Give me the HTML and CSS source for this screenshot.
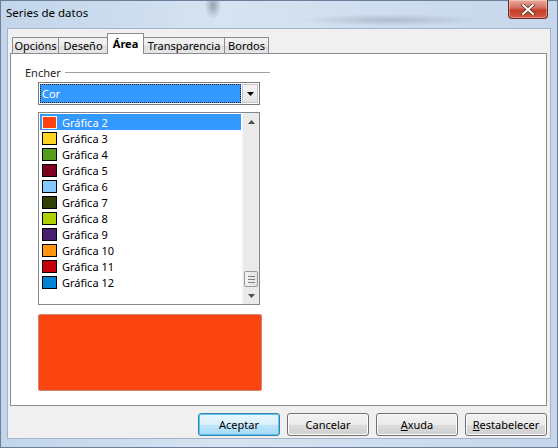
FILE: index.html
```html
<!DOCTYPE html>
<html lang="gl">
  <head>
    <meta charset="UTF-8" />
    <title>Series de datos</title>
    <link rel="stylesheet" href="styles.css">
  </head>
  <body>
    <div class="window">
      <div class="titlebar">
        <span class="title">Series de datos</span>
        <span class="close">
          <svg width="14" height="11" viewBox="0 0 14 11">
            <path d="M2,1 L12,10 M12,1 L2,10" stroke="#5a2a22" stroke-width="3.6" stroke-linecap="round"></path>
            <path d="M2,1 L12,10 M12,1 L2,10" stroke="#fff" stroke-width="2" stroke-linecap="round"></path>
          </svg>
        </span>
      </div>

      <div class="client">
        <!-- pestanas -->
        <div class="tabs">
          <div class="tab tab-opcions">Opcións</div>
          <div class="tab tab-deseno">Deseño</div>
          <div class="tab tab-area active">Área</div>
          <div class="tab tab-transp">Transparencia</div>
          <div class="tab tab-bordos">Bordos</div>
        </div>

        <div class="panel">
          <div class="group-head">
            <span>Encher</span>
            <span class="group-line"></span>
          </div>

          <div class="combo">
            <div class="combo-value"><span>Cor</span></div>
            <div class="combo-btn">
              <svg width="7" height="4" viewBox="0 0 7 4"><path d="M0,0 H7 L3.5,4 Z" fill="#000"></path></svg>
            </div>
          </div>

          <div class="listbox">
            <ul class="items">
              <li class="selected"><i style="background:#ff420e"></i>Gráfica 2</li>
              <li><i style="background:#ffd320"></i>Gráfica 3</li>
              <li><i style="background:#579d1c"></i>Gráfica 4</li>
              <li><i style="background:#7e0021"></i>Gráfica 5</li>
              <li><i style="background:#83caff"></i>Gráfica 6</li>
              <li><i style="background:#314004"></i>Gráfica 7</li>
              <li><i style="background:#aecf00"></i>Gráfica 8</li>
              <li><i style="background:#4b1f6f"></i>Gráfica 9</li>
              <li><i style="background:#ff950e"></i>Gráfica 10</li>
              <li><i style="background:#c5000b"></i>Gráfica 11</li>
              <li><i style="background:#0084d1"></i>Gráfica 12</li>
            </ul>
            <div class="scrollbar">
              <span class="arrow">
                <svg width="7" height="4" viewBox="0 0 7 4"><path d="M0,4 H7 L3.5,0 Z" fill="#4f4f4f"></path></svg>
              </span>
              <span class="track">
                <span class="thumb"><b></b><b></b><b></b></span>
              </span>
              <span class="arrow">
                <svg width="7" height="4" viewBox="0 0 7 4"><path d="M0,0 H7 L3.5,4 Z" fill="#4f4f4f"></path></svg>
              </span>
            </div>
          </div>

          <div class="preview"></div>
        </div>

        <div class="buttons">
          <button class="btn default">Aceptar</button>
          <button class="btn">Cancelar</button>
          <button class="btn"><u>A</u>xuda</button>
          <button class="btn"><u>R</u>estabelecer</button>
        </div>
      </div>
    </div>
  </body>
</html>
```

FILE: styles.css
```css
*,
*:before,
*:after {
  box-sizing: border-box;
}
body {
  margin: 0;
  font: 11px/1 "Noto Sans", "Open Sans", sans-serif;
  color: #000;
}
.window {
  width: 558px;
  height: 448px;
  display: flex;
  flex-direction: column;
  background:
    radial-gradient(ellipse 8px 14px at 212px 4px, rgba(70, 80, 100, 0.45), transparent),
    radial-gradient(ellipse 90px 6px at 390px 19px, rgba(90, 100, 120, 0.28), transparent),
    linear-gradient(90deg, #c2d5ea, #d6e3f1 40%, #cddcee 75%, #c6d7eb);
  border: 1px solid #6a7f99;
}
.titlebar {
  height: 27px;
  display: flex;
  align-items: flex-start;
  justify-content: space-between;
  padding-left: 5px;
}
.title {
  margin-top: 5px;
  font-size: 11.5px;
  line-height: 14px;
}
.close {
  width: 40px;
  height: 19px;
  margin-right: 9px;
  margin-top: -1px;
  display: flex;
  align-items: center;
  justify-content: center;
  border: 1px solid #6b2b22;
  border-top: none;
  border-radius: 0 0 4px 4px;
  background: linear-gradient(#e9a899, #d2705f 45%, #c2402d 55%, #d2573f);
  box-shadow: inset 0 0 0 1px rgba(255, 255, 255, 0.35);
}
.client {
  flex: 1;
  margin: 0 6px 8px;
  background: #f0f0f0;
  border: 1px solid #a3b4c8;
  padding: 4px 3px 0 2px;
  display: flex;
  flex-direction: column;
}

/* pestanas */
.tabs {
  height: 20px;
  display: flex;
  align-items: flex-end;
  padding-left: 2px;
  position: relative;
  z-index: 1;
}
.tab {
  height: 16px;
  border: 1px solid #898c95;
  border-bottom: none;
  margin-left: -1px;
  background: linear-gradient(#f3f3f3, #ebebeb 50%, #dedede 51%, #e5e5e5);
  display: flex;
  align-items: center;
  justify-content: center;
}
.tab:first-child {
  margin-left: 0;
}
.tab.active {
  height: 21px;
  margin-bottom: -1px;
  background: #fff;
  font-weight: bold;
  padding-bottom: 1px;
}
.tab-opcions { width: 47px; }
.tab-deseno { width: 50px; }
.tab-area { width: 37px; }
.tab-transp { width: 82px; }
.tab-bordos { width: 45px; }

.panel {
  height: 353px;
  background: #fff;
  border: 1px solid #898c95;
  padding: 11px 0 0 14px;
}
.group-head {
  width: 245px;
  height: 14px;
  display: flex;
  align-items: center;
  gap: 4px;
  color: #1e1e1e;
}
.group-line {
  flex: 1;
  height: 1px;
  background: #a0a0a0;
}

/* lista despregable */
.combo {
  width: 222px;
  height: 23px;
  margin: 3px 0 0 13px;
  border: 1px solid #7a7a7a;
  padding: 1px;
  display: flex;
  gap: 1px;
}
.combo-value {
  flex: 1;
  background: #3399ff;
  border: 1px dotted #1a1a1a;
  color: #fff;
  display: flex;
  align-items: center;
  padding-left: 1px;
}
.combo-btn {
  width: 16px;
  border: 1px solid #c6c6c6;
  background: linear-gradient(#f4f4f4, #e4e4e4);
  display: flex;
  align-items: center;
  justify-content: center;
}

.listbox {
  width: 222px;
  height: 193px;
  margin: 7px 0 0 13px;
  border: 1px solid #828790;
  display: flex;
}
.items {
  flex: 1;
  list-style: none;
  margin: 0;
  padding: 1px 1px 0 1px;
}
.items li {
  height: 16px;
  display: flex;
  align-items: center;
  padding-left: 2px;
  padding-top: 1px;
  gap: 5px;
}
.items li i {
  width: 15px;
  height: 13px;
  border: 1px solid #000;
}
.items li.selected {
  background: #3399ff;
  color: #fff;
}
.items li.selected i {
  border-color: #f4f4f4;
}
.scrollbar {
  width: 17px;
  background: #eaeaea;
  border-left: 1px solid #f4f4f4;
  display: flex;
  flex-direction: column;
}
.scrollbar .arrow {
  height: 17px;
  display: flex;
  align-items: center;
  justify-content: center;
}
.scrollbar .track {
  flex: 1;
  display: flex;
  flex-direction: column;
  justify-content: flex-end;
}
.thumb {
  height: 16px;
  margin: 0 1px 0 1px;
  border: 1px solid #9a9a9a;
  border-radius: 2px;
  background: linear-gradient(90deg, #f3f3f3, #e2e2e2);
  display: flex;
  flex-direction: column;
  justify-content: center;
  align-items: center;
  gap: 2px;
}
.thumb b {
  width: 7px;
  height: 1px;
  background: #7d7d7d;
}

.preview {
  width: 224px;
  height: 77px;
  margin: 9px 0 0 13px;
  background: #fc4410;
  border: 1px solid #c9896f;
  border-radius: 2px;
}

/* botons */
.buttons {
  display: flex;
  justify-content: flex-end;
  gap: 7px;
  margin-top: 7px;
}
.btn {
  width: 82px;
  height: 23px;
  font: 11px/1 "Noto Sans", "Open Sans", sans-serif;
  color: #000;
  border: 1px solid #707070;
  border-radius: 3px;
  background: linear-gradient(#f2f2f2, #ebebeb 50%, #dddddd 51%, #cfcfcf);
  box-shadow: inset 0 0 0 1px #fcfcfc;
  padding: 0;
}
.btn.default {
  border-color: #3c7fb1;
  background: linear-gradient(#eaf6fd, #d9f0fc 50%, #bee6fd 51%, #a7d9f5);
  box-shadow: inset 0 0 0 1px #58c6f4;
}
.btn u {
  text-decoration: underline;
}
```
